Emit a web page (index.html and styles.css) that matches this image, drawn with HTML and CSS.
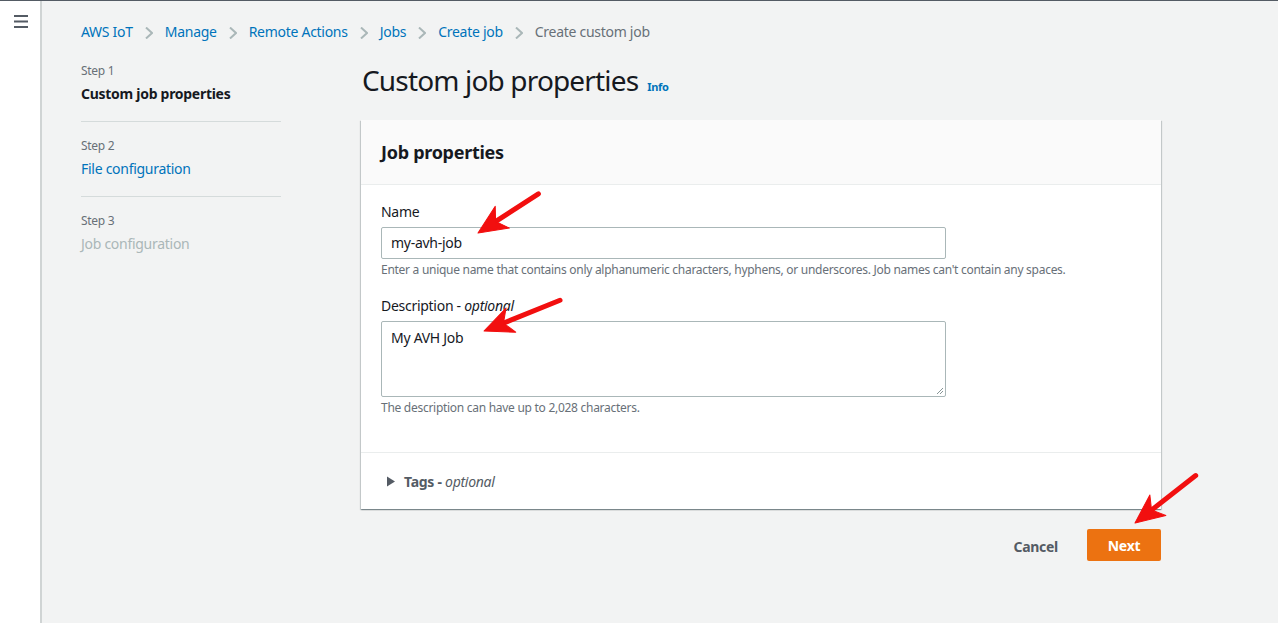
FILE: index.html
```html
<!DOCTYPE html>
<html>
<head>
<meta charset="utf-8">
<link rel="stylesheet" href="styles.css">
</head>
<body>
<div class="page">
  <aside class="rail">
    <svg class="burger" width="14" height="14" viewBox="0 0 14 14"><path d="M0 1h14M0 6.5h14M0 12h14" stroke="#545b64" stroke-width="2"/></svg>
  </aside>
  <main class="main">
    <nav class="crumbs">
      <a class="crumb">AWS IoT</a><span class="chev"><svg width="8" height="12" viewBox="0 0 8 12"><path d="M1 0.5L7 6L1 11.5" fill="none" stroke="#aab7b8" stroke-width="2"/></svg></span>
      <a class="crumb">Manage</a><span class="chev"><svg width="8" height="12" viewBox="0 0 8 12"><path d="M1 0.5L7 6L1 11.5" fill="none" stroke="#aab7b8" stroke-width="2"/></svg></span>
      <a class="crumb">Remote Actions</a><span class="chev"><svg width="8" height="12" viewBox="0 0 8 12"><path d="M1 0.5L7 6L1 11.5" fill="none" stroke="#aab7b8" stroke-width="2"/></svg></span>
      <a class="crumb">Jobs</a><span class="chev"><svg width="8" height="12" viewBox="0 0 8 12"><path d="M1 0.5L7 6L1 11.5" fill="none" stroke="#aab7b8" stroke-width="2"/></svg></span>
      <a class="crumb">Create job</a><span class="chev"><svg width="8" height="12" viewBox="0 0 8 12"><path d="M1 0.5L7 6L1 11.5" fill="none" stroke="#aab7b8" stroke-width="2"/></svg></span>
      <span class="crumb current">Create custom job</span>
    </nav>
    <div class="layout">
      <ol class="steps">
        <li class="step"><div class="step-num">Step 1</div><div class="step-title active">Custom job properties</div></li>
        <li class="step"><div class="step-num">Step 2</div><div class="step-title link">File configuration</div></li>
        <li class="step last"><div class="step-num">Step 3</div><div class="step-title disabled">Job configuration</div></li>
      </ol>
      <section class="content">
        <div class="title-row"><h1 class="title">Custom job properties</h1><a class="info">Info</a></div>
        <div class="card">
          <div class="card-head"><h2>Job properties</h2></div>
          <div class="card-body">
            <div class="field">
              <label class="label">Name</label>
              <div class="input">my-avh-job</div>
              <div class="hint">Enter a unique name that contains only alphanumeric characters, hyphens, or underscores. Job names can't contain any spaces.</div>
            </div>
            <div class="field second">
              <label class="label">Description - <i>optional</i></label>
              <div class="textarea">My AVH Job
                <svg class="grip" width="8" height="8" viewBox="0 0 8 8"><path d="M7 1L1 7M7 4L4 7" stroke="#879596" stroke-width="1"/></svg>
              </div>
              <div class="hint">The description can have up to 2,028 characters.</div>
            </div>
          </div>
          <div class="card-foot">
            <svg class="caret" width="10" height="11" viewBox="0 0 10 11"><path d="M1 0.5L9 5.5L1 10.5Z" fill="#545b64"/></svg>
            <span class="tags">Tags - <i>optional</i></span>
          </div>
        </div>
        <div class="actions">
          <button class="btn-link">Cancel</button>
          <button class="btn-primary">Next</button>
        </div>
      </section>
    </div>
  </main>
</div>
<svg class="arrows" width="1278" height="623" viewBox="0 0 1278 623">
  <g fill="#f20f0f" stroke="#f20f0f">
    <g transform="translate(478 233) rotate(147)">
      <line x1="-72" y1="0" x2="-18" y2="0" stroke-width="5" stroke-linecap="round"/>
      <path d="M0 0L-29 -13L-21 0L-29 13Z" stroke-width="1" stroke-linejoin="round"/>
    </g>
    <g transform="translate(484 331) rotate(158)">
      <line x1="-82" y1="0" x2="-18" y2="0" stroke-width="5" stroke-linecap="round"/>
      <path d="M0 0L-29 -13L-21 0L-29 13Z" stroke-width="1" stroke-linejoin="round"/>
    </g>
    <g transform="translate(1135 523) rotate(142)">
      <line x1="-77" y1="0" x2="-18" y2="0" stroke-width="5" stroke-linecap="round"/>
      <path d="M0 0L-29 -13L-21 0L-29 13Z" stroke-width="1" stroke-linejoin="round"/>
    </g>
  </g>
</svg>
</body>
</html>
```
FILE: styles.css
```css
* { box-sizing: border-box; }
html, body { margin: 0; padding: 0; }
body {
  font-family: "Noto Sans", "Open Sans", sans-serif;
  font-size: 14px;
  letter-spacing: -0.02em;
  color: #16191f;
  background: #f2f3f3;
  width: 1278px;
  height: 623px;
  overflow: hidden;
  position: relative;
}
.page {
  display: flex;
  height: 623px;
  border-top: 1px solid #545b64;
}
.rail {
  width: 42px;
  flex: none;
  background: #fff;
  border-right: 2px solid #d0d4d4;
  padding: 14px 0 0 14px;
}
.burger { display: block; }
.main {
  flex: 1;
  padding-left: 39px;
}
.crumbs {
  display: flex;
  align-items: center;
  height: 20px;
  margin-top: 21px;
  line-height: 20px;
}
.crumb { color: #0073bb; }
.crumb.current { color: #687078; }
.chev {
  width: 32px;
  height: 12px;
  display: flex;
  justify-content: center;
  margin-top: 1px;
}
.chev svg { display: block; }
.layout {
  display: flex;
  gap: 80px;
  margin-top: 21px;
}
.steps {
  list-style: none;
  margin: 0;
  padding: 0;
  width: 200px;
  flex: none;
}
.step {
  padding: 16px 0;
  border-bottom: 1px solid #d5dbdb;
}
.step:first-child { padding-top: 0; }
.step.last { border-bottom: none; }
.step-num {
  font-size: 12px;
  line-height: 16px;
  color: #687078;
  margin-bottom: 4px;
}
.step-title { line-height: 22px; }
.step-title.active { font-weight: 700; }
.step-title.link { color: #0073bb; }
.step-title.disabled { color: #aab7b8; }
.content { width: 800px; flex: none; margin-top: -3px; }
.title-row {
  display: flex;
  align-items: baseline;
  gap: 9px;
  height: 40px;
  margin-bottom: 20px;
}
.title {
  margin: 0;
  font-size: 28px;
  font-weight: 400;
  letter-spacing: -0.03em;
  line-height: 40px;
  padding-left: 1px;
}
.info {
  color: #0073bb;
  font-size: 11px;
  font-weight: 700;
}
.card {
  background: #fff;
  box-shadow: 0 1px 1px 0 rgba(0,28,36,.3), 1px 1px 1px 0 rgba(0,28,36,.15), -1px 1px 1px 0 rgba(0,28,36,.15);
}
.card-head {
  background: #fafafa;
  border-bottom: 1px solid #eaeded;
  padding: 20px 20px;
}
.card-head h2 {
  margin: 0;
  font-size: 18px;
  font-weight: 700;
  line-height: 24px;
}
.card-body {
  padding: 16px 20px 36px;
  border-bottom: 1px solid #eaeded;
}
.field.second { margin-top: 17px; }
.label {
  display: block;
  line-height: 22px;
  margin-bottom: 4px;
}
.input, .textarea {
  width: 565px;
  border: 1px solid #aab7b8;
  border-radius: 2px;
  padding: 0 9px;
  line-height: 30px;
  background: #fff;
}
.input { height: 32px; }
.textarea {
  height: 76px;
  padding-top: 1px;
  line-height: 30px;
  position: relative;
}
.grip { position: absolute; right: 1px; bottom: 1px; }
.hint {
  font-size: 12px;
  line-height: 16px;
  color: #687078;
  margin-top: 3px;
}
.card-foot {
  display: flex;
  align-items: center;
  height: 56px;
  padding-left: 25px;
  gap: 8px;
}
.tags {
  font-weight: 700;
  color: #545b64;
}
.tags i { font-weight: 400; }
.actions {
  display: flex;
  justify-content: flex-end;
  align-items: center;
  gap: 9px;
  margin-top: 20px;
}
.btn-link, .btn-primary {
  font-family: inherit;
  font-size: 14px;
  letter-spacing: -0.02em;
  font-weight: 700;
  border: none;
  border-radius: 2px;
  height: 32px;
  padding: 0 20px;
  cursor: pointer;
}
.btn-link { background: none; color: #545b64; padding-top: 2px; }
.btn-primary { background: #ec7211; color: #fff; width: 74px; padding-top: 1px; }
.arrows {
  position: absolute;
  left: 0;
  top: 0;
  pointer-events: none;
}
```
